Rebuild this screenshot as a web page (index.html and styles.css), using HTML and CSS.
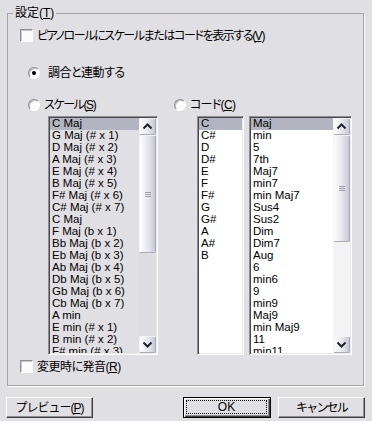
FILE: index.html
```html
<!DOCTYPE html>
<html lang="ja">
<head>
<meta charset="utf-8">
<title>設定</title>
<link rel="stylesheet" href="styles.css">
</head>
<body>
<div class="dialog">
  <fieldset class="group">
    <legend>設定(<u>T</u>)</legend>
    <label class="row row-show"><span class="check"></span><span class="txt kana">ピアノロールにスケールまたはコードを表示する(<u>V</u>)</span></label>
    <label class="row row-link"><span class="radio on"></span><span class="txt txt-wide kanji">調合と連動する</span></label>
    <div class="row row-pick">
      <label class="pick pick-scale"><span class="radio"></span><span class="txt kana">スケール(<u>S</u>)</span></label>
      <label class="pick"><span class="radio"></span><span class="txt kana-s">コード(<u>C</u>)</span></label>
    </div>
    <div class="lists">
      <div class="listbox scale">
        <ul class="items">
          <li class="sel">C Maj</li>
          <li>G Maj (# x 1)</li>
          <li>D Maj (# x 2)</li>
          <li>A Maj (# x 3)</li>
          <li>E Maj (# x 4)</li>
          <li>B Maj (# x 5)</li>
          <li>F# Maj (# x 6)</li>
          <li>C# Maj (# x 7)</li>
          <li>C Maj</li>
          <li>F Maj (b x 1)</li>
          <li>Bb Maj (b x 2)</li>
          <li>Eb Maj (b x 3)</li>
          <li>Ab Maj (b x 4)</li>
          <li>Db Maj (b x 5)</li>
          <li>Gb Maj (b x 6)</li>
          <li>Cb Maj (b x 7)</li>
          <li>A min</li>
          <li>E min (# x 1)</li>
          <li>B min (# x 2)</li>
          <li>F# min (# x 3)</li>
        </ul>
        <div class="vscroll">
          <div class="sb-btn"><svg width="15" height="15" viewBox="0 0 15 15"><path d="M3.5 9.5 L7.5 5.5 L11.5 9.5" fill="none" stroke="#22222e" stroke-width="2"/></svg></div>
          <div class="thumb thumb-scale"><span class="grip"></span></div>
          <div class="track"></div>
          <div class="sb-btn"><svg width="15" height="15" viewBox="0 0 15 15"><path d="M3.5 5.5 L7.5 9.5 L11.5 5.5" fill="none" stroke="#22222e" stroke-width="2"/></svg></div>
        </div>
      </div>
      <div class="listbox roots">
        <ul class="items">
          <li class="sel">C</li>
          <li>C#</li>
          <li>D</li>
          <li>D#</li>
          <li>E</li>
          <li>F</li>
          <li>F#</li>
          <li>G</li>
          <li>G#</li>
          <li>A</li>
          <li>A#</li>
          <li>B</li>
        </ul>
      </div>
      <div class="listbox types">
        <ul class="items">
          <li class="sel">Maj</li>
          <li>min</li>
          <li>5</li>
          <li>7th</li>
          <li>Maj7</li>
          <li>min7</li>
          <li>min Maj7</li>
          <li>Sus4</li>
          <li>Sus2</li>
          <li>Dim</li>
          <li>Dim7</li>
          <li>Aug</li>
          <li>6</li>
          <li>min6</li>
          <li>9</li>
          <li>min9</li>
          <li>Maj9</li>
          <li>min Maj9</li>
          <li>11</li>
          <li>min11</li>
        </ul>
        <div class="vscroll light">
          <div class="sb-btn"><svg width="15" height="15" viewBox="0 0 15 15"><path d="M3.5 9.5 L7.5 5.5 L11.5 9.5" fill="none" stroke="#22222e" stroke-width="2"/></svg></div>
          <div class="thumb thumb-types"><span class="grip"></span></div>
          <div class="track"></div>
          <div class="sb-btn"><svg width="15" height="15" viewBox="0 0 15 15"><path d="M3.5 5.5 L7.5 9.5 L11.5 5.5" fill="none" stroke="#22222e" stroke-width="2"/></svg></div>
        </div>
      </div>
    </div>
    <label class="row row-sound"><span class="check"></span><span class="txt kanji">変更時に発音(<u>R</u>)</span></label>
  </fieldset>
  <div class="buttons">
    <button class="btn btn-preview kana-m" type="button">プレビュー(<u>P</u>)</button>
    <button class="btn btn-ok" type="button"><span class="focus">OK</span></button>
    <button class="btn btn-cancel kana-l" type="button">キャンセル</button>
  </div>
</div>
</body>
</html>
```

FILE: styles.css
```css
html, body {
  margin: 0;
  padding: 0;
}
body {
  width: 372px;
  height: 421px;
  overflow: hidden;
  background: #e0dfe3;
  color: #000;
  font-family: "Liberation Sans", "Noto Sans CJK JP", sans-serif;
  font-size: 12px;
  line-height: 14px;
  font-feature-settings: "palt";
}
u {
  text-decoration: underline;
  text-underline-offset: 1px;
}
.kana {
  letter-spacing: -1.4px;
}
.kana-s {
  letter-spacing: -0.7px;
}
.kana-m {
  letter-spacing: -1px;
}
.kana-l {
  letter-spacing: -1.8px;
}
.kanji {
  letter-spacing: -0.5px;
}
.dialog {
  padding: 6px 8px 0 7px;
}
.group {
  margin: 0;
  padding: 0 0 11px 0;
  min-width: 0;
  border: 1px solid #a3a2a6;
  box-shadow: 1px 1px 0 #ffffff;
}
.group legend {
  margin-left: 5px;
  padding: 0 2px;
  line-height: 14px;
}
.row {
  display: flex;
  align-items: center;
  height: 15px;
}
.row-show {
  margin: 8px 0 0 12px;
}
.row-link {
  margin: 22px 0 0 20px;
}
.row-pick {
  margin: 17px 0 0 20px;
}
.row-sound {
  margin: 4px 0 0 12px;
}
.pick {
  display: flex;
  align-items: center;
}
.pick-scale {
  width: 146px;
}
.txt {
  margin-left: 4px;
  white-space: nowrap;
}
.txt-wide {
  margin-left: 8px;
}
.check {
  box-sizing: border-box;
  width: 13px;
  height: 13px;
  flex: none;
  background: #fbfbfb;
  border: 1px solid;
  border-color: #8f8e93 #ffffff #ffffff #8f8e93;
  box-shadow: inset 1px 1px 0 #c9c8cc;
}
.radio {
  box-sizing: border-box;
  width: 12px;
  height: 12px;
  flex: none;
  border-radius: 50%;
  background: #fdfdfd;
  border: 1px solid;
  border-color: #8f8e93 #ffffff #ffffff #8f8e93;
  box-shadow: inset 1px 1px 0 #b9b8bc;
  display: flex;
  align-items: center;
  justify-content: center;
}
.radio.on::after {
  content: "";
  width: 4px;
  height: 4px;
  border-radius: 50%;
  background: #000;
}
.lists {
  display: flex;
  margin: 4px 0 0 40px;
  height: 239px;
}
.listbox {
  box-sizing: border-box;
  height: 239px;
  display: flex;
  padding: 1px;
  overflow: hidden;
  background: #ffffff;
  border: 1px solid;
  border-color: #8f8e93 #ffffff #ffffff #8f8e93;
  box-shadow: inset 1px 1px 0 #4a4a4e, inset -1px -1px 0 #ecebe6;
}
.scale {
  width: 110px;
  background: #e0dfe3;
}
.roots {
  width: 47px;
  margin-left: 39px;
}
.types {
  width: 103px;
  margin-left: 5px;
}
.items {
  flex: 1;
  min-width: 0;
  list-style: none;
  margin: 0;
  padding: 0;
  overflow: hidden;
}
.items li {
  box-sizing: border-box;
  height: 12px;
  line-height: 11px;
  font-size: 11.5px;
  padding-left: 2px;
  white-space: nowrap;
}
.items li.sel {
  background: #b2b4bf;
}
.vscroll {
  width: 17px;
  flex: none;
  display: flex;
  flex-direction: column;
  background: #dddde1;
}
.vscroll.light {
  background: #f3f3f6;
}
.sb-btn,
.thumb {
  box-sizing: border-box;
  border: 1px solid;
  border-color: #f4f4f8 #a9a9ba #a9a9ba #f4f4f8;
  border-radius: 2px;
  background: linear-gradient(to right, #fdfdff 0%, #e6e6ee 55%, #c7c8d6 100%);
}
.sb-btn {
  height: 17px;
  flex: none;
  display: flex;
  align-items: center;
  justify-content: center;
}
.sb-btn svg {
  display: block;
}
.thumb {
  flex: none;
  display: flex;
  align-items: center;
  justify-content: center;
}
.thumb-scale {
  height: 118px;
}
.thumb-types {
  height: 107px;
}
.grip {
  width: 6px;
  height: 5px;
  background: repeating-linear-gradient(to bottom, #9c9cae 0, #9c9cae 1px, transparent 1px, transparent 2px);
}
.track {
  flex: 1;
}
.buttons {
  display: flex;
  margin: 11px -1px 0 -1px;
}
.btn {
  box-sizing: border-box;
  height: 21px;
  margin: 0;
  padding: 0;
  font-family: inherit;
  font-size: 12px;
  line-height: 14px;
  color: #000;
  background: #e0dfe3;
  border: 1px solid;
  border-color: #ffffff #404040 #404040 #ffffff;
  box-shadow: inset -1px -1px 0 #8f8e93;
  display: flex;
  align-items: center;
  justify-content: center;
}
.btn-preview {
  width: 87px;
}
.btn-ok {
  width: 88px;
  margin-left: auto;
  border-color: #000;
  box-shadow: inset 1px 1px 0 #ffffff, inset -1px -1px 0 #404040, inset -2px -2px 0 #8f8e93;
  padding: 2px 3px 3px 2px;
}
.btn-ok .focus {
  flex: 1;
  align-self: stretch;
  display: flex;
  align-items: center;
  justify-content: center;
  border: 1px dotted #000;
}
.btn-cancel {
  width: 87px;
  margin-left: 7px;
}
```
